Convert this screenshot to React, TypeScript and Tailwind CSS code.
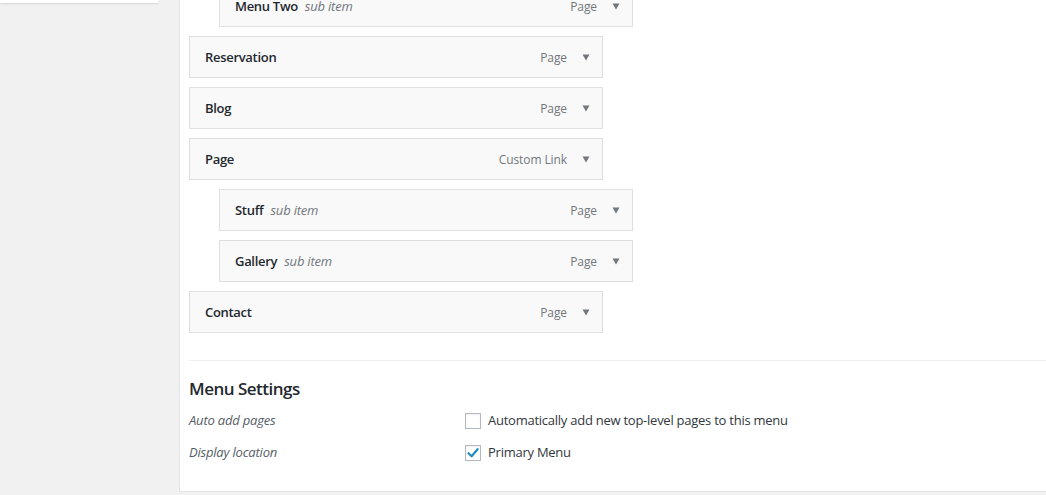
import React from "react";

type MenuItem = {
  title: string;
  type: string;
  sub?: boolean;
};

const items: MenuItem[] = [
  { title: "Menu Two", type: "Page", sub: true },
  { title: "Reservation", type: "Page" },
  { title: "Blog", type: "Page" },
  { title: "Page", type: "Custom Link" },
  { title: "Stuff", type: "Page", sub: true },
  { title: "Gallery", type: "Page", sub: true },
  { title: "Contact", type: "Page" },
];

function Arrow() {
  return (
    <svg width="8" height="7" viewBox="0 0 8 7" className="text-[#72777c]">
      <path d="M0.5 0.5 H7.5 L4 6.5 Z" fill="currentColor" />
    </svg>
  );
}

function Checkbox({ checked }: { checked?: boolean }) {
  return (
    <span className="w-[16px] h-[16px] border border-[#b4b9be] bg-white shadow-[inset_0_1px_2px_rgba(0,0,0,0.07)] flex items-center justify-center shrink-0">
      {checked && (
        <svg width="14" height="14" viewBox="0 0 14 14">
          <path
            d="M2.5 7.2 L5.6 10.2 L11.6 3.2"
            fill="none"
            stroke="#1e8cbe"
            strokeWidth="2.2"
            strokeLinecap="round"
            strokeLinejoin="round"
          />
        </svg>
      )}
    </span>
  );
}

export default function App() {
  return (
    <div
      className="flex w-[1046px] h-[495px] overflow-hidden bg-[#f1f1f1] text-[13px] text-[#23282d]"
      style={{ fontFamily: '"Open Sans", "Noto Sans", sans-serif' }}
    >
      {/* Left column */}
      <div className="w-[179px] shrink-0">
        <div className="w-[158px] h-[3px] bg-white shadow-[0_1px_2px_rgba(0,0,0,0.12)]" />
      </div>

      {/* Main panel */}
      <div className="flex-1 h-[492px] bg-white border-l border-b border-[#e2e4e7] pl-[9px]">
        <div className="-mt-[15px] flex flex-col gap-[9px]">
          {items.map((item) => (
            <div
              key={item.title}
              className={`w-[414px] h-[42px] border border-[#dfdfdf] bg-[#f9f9f9] flex items-center pt-[2px] pl-[15px] pr-[12px] ${
                item.sub ? "ml-[30px]" : ""
              }`}
            >
              <span className="font-semibold tracking-[-0.3px]">
                {item.title}
              </span>
              {item.sub && (
                <span className="italic text-[#72777c] ml-[7px] tracking-[-0.2px]">
                  sub item
                </span>
              )}
              <span className="ml-auto text-[12px] text-[#72777c] tracking-[-0.1px]">
                {item.type}
              </span>
              <span className="ml-[15px] flex items-center -mt-[2px]">
                <Arrow />
              </span>
            </div>
          ))}
        </div>

        <div className="mt-[27px] border-t border-[#eeeeee] pt-[16px]">
          <h3 className="text-[17px] font-semibold text-[#23282d] leading-[24px] tracking-[-0.5px]">
            Menu Settings
          </h3>
          <div className="mt-[11px] flex flex-col gap-[14px]">
            <div className="flex items-center h-[18px]">
              <span className="w-[276px] italic text-[#555d66] tracking-[-0.2px]">
                Auto add pages
              </span>
              <Checkbox />
              <span className="ml-[7px] text-[#32373c] tracking-[-0.25px]">
                Automatically add new top-level pages to this menu
              </span>
            </div>
            <div className="flex items-center h-[18px]">
              <span className="w-[276px] italic text-[#555d66] tracking-[-0.2px]">
                Display location
              </span>
              <Checkbox checked />
              <span className="ml-[7px] text-[#32373c] tracking-[-0.25px]">
                Primary Menu
              </span>
            </div>
          </div>
        </div>
      </div>
    </div>
  );
}
